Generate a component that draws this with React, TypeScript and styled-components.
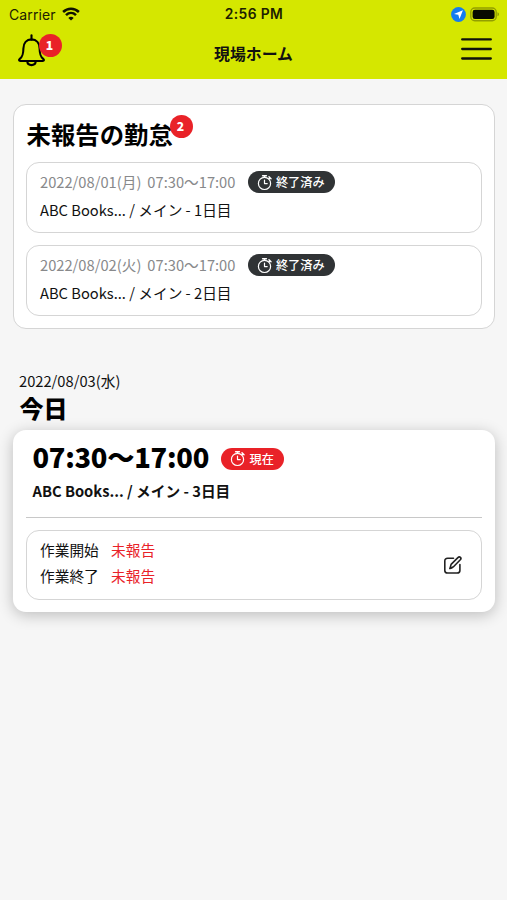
import React from 'react';
import styled, { createGlobalStyle } from 'styled-components';

const GlobalStyle = createGlobalStyle`
  * { box-sizing: border-box; }
  html, body { margin: 0; background: #f6f6f6; }
  body { font-family: "Noto Sans CJK JP", "Noto Sans", sans-serif; color: #111; }
  h1, h2, p { margin: 0; }
  svg { display: block; flex: none; }
`;

const Screen = styled.div`
  min-height: 900px;
  background: #f6f6f6;
  overflow: hidden;
`;

const Header = styled.header`
  height: 79px;
  background: #d5e700;
`;

const StatusBar = styled.div`
  display: grid;
  grid-template-columns: 1fr auto 1fr;
  align-items: center;
  height: 27px;
  padding: 0 7px 0 9px;
  font-family: Inter, sans-serif;
  font-size: 14px;
  line-height: 27px;
  color: #1c2000;
`;

const Carrier = styled.div`
  display: flex;
  align-items: center;
  gap: 6px;
  letter-spacing: 0.12px;
`;

const Clock = styled.div`
  padding-top: 1px;
  margin-right: 1px;
  font-size: 13.8px;
  font-weight: 600;
  letter-spacing: 0.4px;
`;

const StatusIcons = styled.div`
  display: flex;
  align-items: center;
  justify-content: flex-end;
  gap: 4px;
`;

const NavBar = styled.div`
  display: grid;
  grid-template-columns: 1fr auto 1fr;
  align-items: center;
  height: 52px;
  padding: 0 15px 0 17px;
`;

const NavTitle = styled.h1`
  margin: 2px 2px 0 0;
  font-size: 15.9px;
  font-weight: 700;
  line-height: 24px;
`;

const IconButton = styled.button<{ $end?: boolean }>`
  position: relative;
  justify-self: ${(p) => (p.$end ? 'end' : 'start')};
  padding: 0;
  margin-bottom: ${(p) => (p.$end ? '8px' : '6px')};
  border: 0;
  background: none;
  color: #000;
`;

const CountBadge = styled.span<{ $left: number; $top: number }>`
  position: absolute;
  left: ${(p) => p.$left}px;
  top: ${(p) => p.$top}px;
  width: 23px;
  height: 23px;
  padding-right: 1px;
  border-radius: 50%;
  background: #e92228;
  color: #fff;
  font-family: "Noto Sans CJK JP", sans-serif;
  font-size: 12.2px;
  font-weight: 900;
  line-height: 22px;
  text-align: center;
`;

const Main = styled.main`
  padding: 25px 12px 0 13px;
`;

const Card = styled.section<{ $raised?: boolean }>`
  padding: ${(p) => (p.$raised ? '8px 13px 12px 13px' : '12px 12px 12px')};
  border: ${(p) => (p.$raised ? '0' : '1.5px solid #d5d5d5')};
  border-radius: 13px;
  background: #fff;
  box-shadow: ${(p) => (p.$raised ? '0 3px 15px rgba(0, 0, 0, 0.24)' : 'none')};
`;

const Heading = styled.h2<{ $today?: boolean }>`
  position: relative;
  width: fit-content;
  margin-left: 0.5px;
  font-size: ${(p) => (p.$today ? '24px' : '24.4px')};
  font-weight: ${(p) => (p.$today ? 900 : 700)};
  line-height: ${(p) => (p.$today ? '31px' : '33px')};
  color: #000;
`;

const ShiftList = styled.div`
  display: grid;
  gap: 12px;
  margin-top: 12px;
`;

const Panel = styled.div`
  height: 71px;
  padding: 7px 12.5px 7px 13px;
  border: 1.5px solid #d5d5d5;
  border-radius: 13px;
`;

const Row = styled.div`
  display: flex;
  align-items: center;
  height: 24px;
`;

const ShiftTime = styled.div`
  display: flex;
  gap: 6px;
  margin-right: 12.5px;
  color: #88898b;
  font-size: 14.7px;
  line-height: 24px;
  white-space: nowrap;
`;

const SiteName = styled.p<{ $bold?: boolean }>`
  font-size: 14.7px;
  font-weight: ${(p) => (p.$bold ? 700 : 400)};
  line-height: 22px;
  margin-top: 5px;
  padding-left: ${(p) => (p.$bold ? '6.5px' : '0')};
`;

const Pill = styled.span<{ $active?: boolean }>`
  display: inline-flex;
  align-items: center;
  gap: 3px;
  height: 22px;
  padding: 0 10px 0 9px;
  border-radius: 11px;
  background: ${(p) => (p.$active ? '#e92228' : '#303335')};
  color: #fff;
  font-size: 12.2px;
  font-weight: 500;
  line-height: 20px;
  white-space: nowrap;
`;

const DayHeading = styled.div`
  margin: 41px 0 7px 6px;
`;

const DayDate = styled.p`
  font-size: 14.7px;
  line-height: 22px;
`;

const TodayTime = styled.div`
  display: flex;
  align-items: center;
  height: 37px;
  padding-left: 6.5px;
  gap: 12.5px;
`;

const BigTime = styled.span`
  font-size: 27.3px;
  font-weight: 900;
  line-height: 37px;
  letter-spacing: -0.27px;
  color: #000;
`;

const TimePill = styled(Pill)`
  margin-top: 4px;
`;

const Divider = styled.hr`
  height: 1px;
  margin: 14.5px 0 12px;
  border: 0;
  background: #c8c8c8;
`;

const ReportPanel = styled(Panel)`
  display: flex;
  align-items: center;
  justify-content: space-between;
  height: 70px;
  padding: 0 18px 0 13px;
`;

const ReportRows = styled.div`
  margin-top: -3px;
`;

const ReportRow = styled.div`
  display: flex;
  gap: 12px;
  height: 26px;
  font-size: 14.7px;
  line-height: 26px;
`;

const Label = styled.span`
  width: 59px;
`;

const Missing = styled.span`
  color: #e92228;
`;

const Wifi = () => (
  <svg width="18" height="14" viewBox="0 0 18 14" fill="none" stroke="#101300" strokeWidth="2.5">
    <path d="M1.1 5C5.6.6 12.4.6 16.9 5" />
    <path d="M4 8.1c2.9-2.8 7.1-2.8 10 0" />
    <path d="M9 13.6 6.3 10.9c1.5-1.5 3.9-1.5 5.4 0Z" fill="#101300" stroke="none" />
  </svg>
);

const Location = () => (
  <svg width="15" height="15" viewBox="0 0 15 15">
    <circle cx="7.5" cy="7.5" r="7.4" fill="#147cef" />
    <path d="M11.9 3.3 8.5 12 7.3 7.8 3 7.1Z" fill="#fff" />
  </svg>
);

const Battery = () => (
  <svg width="30" height="15" viewBox="0 0 30 15">
    <rect x="0.8" y="1" width="25.4" height="12.8" rx="4" fill="none" stroke="#939f00" strokeWidth="1.4" />
    <rect x="2.6" y="2.8" width="22" height="9.2" rx="2.3" fill="#080a00" />
    <path d="M27.5 5.2c2 .7 2 3.4 0 4.1Z" fill="#8d9900" />
  </svg>
);

const Bell = () => (
  <svg width="29" height="33" viewBox="0 0 29 33" fill="none" stroke="currentColor" strokeWidth="2.1" strokeLinecap="round" strokeLinejoin="round">
    <path d="M14.5 1.4v4" />
    <path d="M14.5 5.4c-5 0-8 3.6-8.1 9-.1 6.1-.8 8.2-3.6 10.5-1.2 1-.9 2.1.5 2.1h22.4c1.4 0 1.7-1.1.5-2.1-2.8-2.3-3.5-4.4-3.6-10.5-.1-5.4-3.1-9-8.1-9Z" />
    <path d="M10.2 27.4c.3 2.3 2 3.7 4.3 3.7s4-1.4 4.3-3.7" />
  </svg>
);

const Menu = () => (
  <svg width="31" height="24" viewBox="0 0 31 24" stroke="#10130a" strokeWidth="2.3" strokeLinecap="round">
    <path d="M1.2 2.4h28.6M1.2 12h28.6M1.2 21.5h28.6" />
  </svg>
);

const Stopwatch = () => (
  <svg width="16" height="17" viewBox="0 0 16 17" fill="none" stroke="currentColor" strokeWidth="1.2" strokeLinecap="round" strokeLinejoin="round">
    <circle cx="7.5" cy="9.4" r="6.1" />
    <path d="M5.6 1.7h3.8M7.5 1.7v1.5" strokeWidth="1.5" />
    <path d="m12 2.8 2 2M12.9 3.8l-.9 1" strokeWidth="1.5" />
    <path d="M7.5 6v3.6h2.7" />
  </svg>
);

const Edit = () => (
  <svg width="20" height="20" viewBox="0 0 20 20" fill="none" stroke="#222" strokeWidth="1.6" strokeLinecap="round" strokeLinejoin="round">
    <path d="M10.5 3.3H4.6C2.8 3.3 1.8 4.3 1.8 6v9.4C1.8 17 2.8 18 4.6 18h9.5c1.8 0 2.8-1 2.8-2.6V9.6" />
    <path d="m7 13.4 1.1-4 6.8-6.8c1.8-1.8 4.1.3 2.4 2.2l-6.8 6.9Z" fill="#fff" />
    <path d="M7 13.4l2-.6" />
  </svg>
);

const shifts = [
  { date: '2022/08/01(月)', time: '07:30〜17:00', site: 'ABC Books... / メイン - 1日目' },
  { date: '2022/08/02(火)', time: '07:30〜17:00', site: 'ABC Books... / メイン - 2日目' },
];

export default function App() {
  return (
    <Screen>
      <GlobalStyle />
      <Header>
        <StatusBar>
          <Carrier>Carrier <Wifi /></Carrier>
          <Clock>2:56 PM</Clock>
          <StatusIcons><Location /><Battery /></StatusIcons>
        </StatusBar>
        <NavBar>
          <IconButton aria-label="通知">
            <Bell />
            <CountBadge $left={21.5} $top={0.5}>1</CountBadge>
          </IconButton>
          <NavTitle>現場ホーム</NavTitle>
          <IconButton $end aria-label="メニュー"><Menu /></IconButton>
        </NavBar>
      </Header>
      <Main>
        <Card>
          <Heading>
            未報告の勤怠
            <CountBadge $left={143} $top={-2}>2</CountBadge>
          </Heading>
          <ShiftList>
            {shifts.map((shift) => (
              <Panel key={shift.date}>
                <Row>
                  <ShiftTime><span>{shift.date}</span><span>{shift.time}</span></ShiftTime>
                  <Pill><Stopwatch />終了済み</Pill>
                </Row>
                <SiteName>{shift.site}</SiteName>
              </Panel>
            ))}
          </ShiftList>
        </Card>
        <DayHeading>
          <DayDate>2022/08/03(水)</DayDate>
          <Heading $today>今日</Heading>
        </DayHeading>
        <Card $raised>
          <TodayTime>
            <BigTime>07:30〜17:00</BigTime>
            <TimePill $active><Stopwatch />現在</TimePill>
          </TodayTime>
          <SiteName $bold>ABC Books... / メイン - 3日目</SiteName>
          <Divider />
          <ReportPanel>
            <ReportRows>
              <ReportRow><Label>作業開始</Label><Missing>未報告</Missing></ReportRow>
              <ReportRow><Label>作業終了</Label><Missing>未報告</Missing></ReportRow>
            </ReportRows>
            <Edit />
          </ReportPanel>
        </Card>
      </Main>
    </Screen>
  );
}
